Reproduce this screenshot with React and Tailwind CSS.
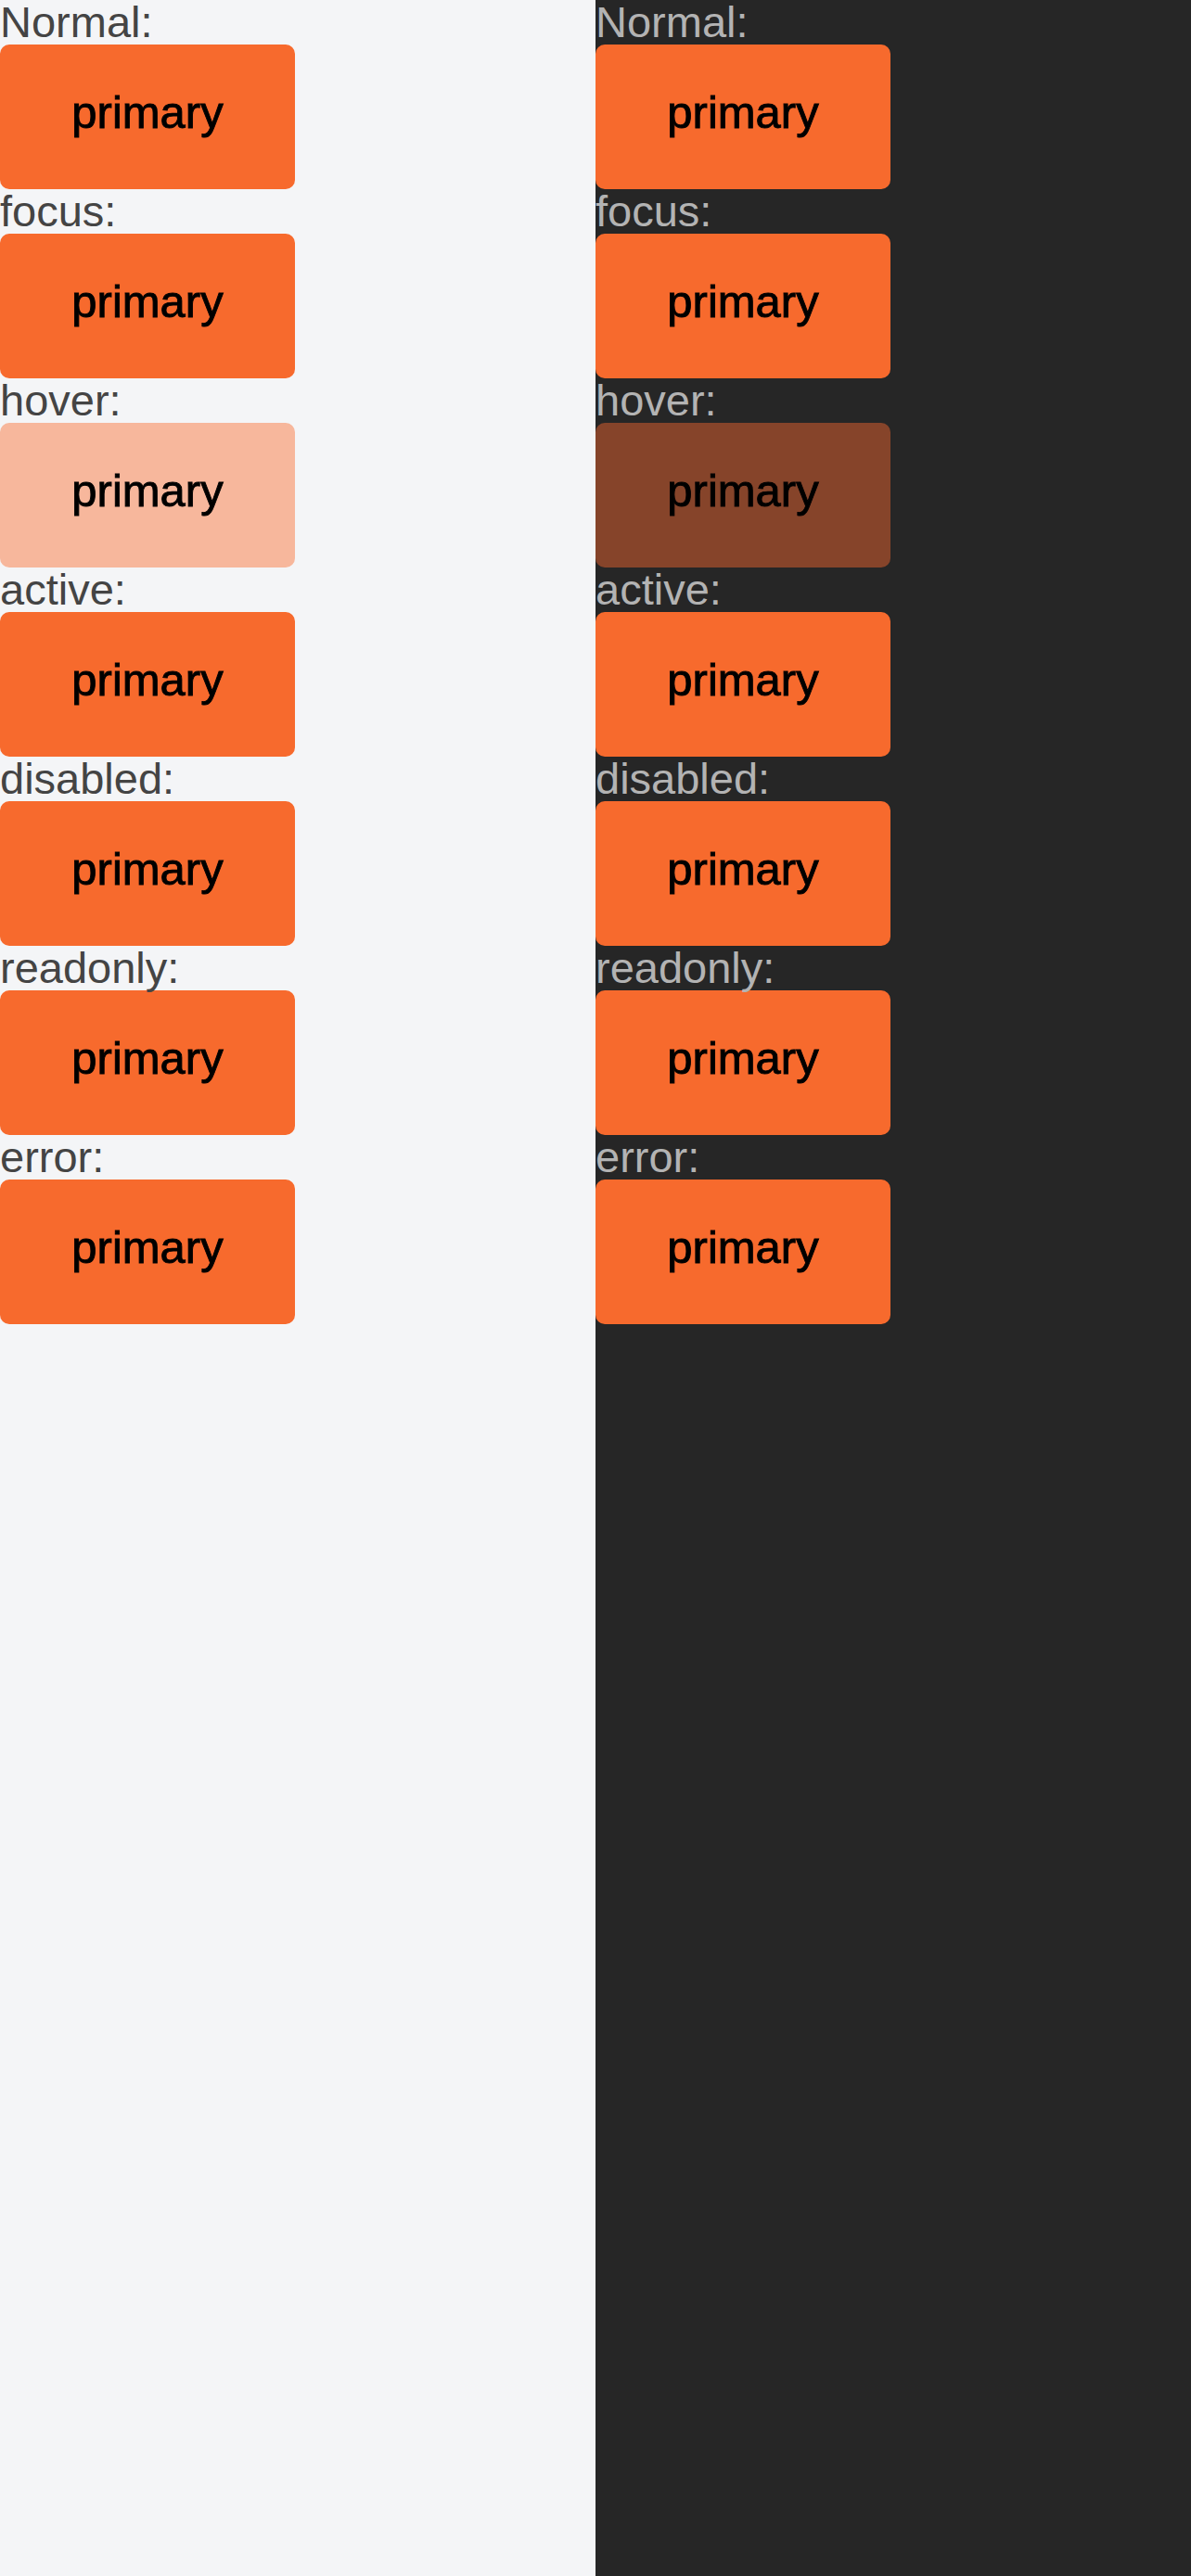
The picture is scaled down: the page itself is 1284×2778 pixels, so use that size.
const STATES = ["Normal", "focus", "hover", "active", "disabled", "readonly", "error"];

function Panel({ dark }) {
  return (
    <div className={dark ? "flex-1 bg-[#262626]" : "flex-1 bg-[#f4f5f7]"}>
      {STATES.map((s) => (
        <div key={s}>
          <div
            className={
              "h-[48px] text-[47px] leading-[48px] " +
              (dark ? "text-[#b3b3b3]" : "text-[#444444]")
            }
          >
            {s}:
          </div>
          <button
            className={
              "flex h-[156px] w-[318px] items-center justify-center rounded-[10px] pb-[10px] text-[49px] leading-none text-black [-webkit-text-stroke:0.9px_black] " +
              (s === "hover"
                ? dark
                  ? "bg-[#86442a]"
                  : "bg-[#f7b79c]"
                : "bg-[#f76a2d]")
            }
          >
            primary
          </button>
        </div>
      ))}
    </div>
  );
}

export default function App() {
  return (
    <div className="flex min-h-[2778px] w-[1284px] font-['Liberation_Sans',Arial,sans-serif]">
      <Panel />
      <Panel dark />
    </div>
  );
}
